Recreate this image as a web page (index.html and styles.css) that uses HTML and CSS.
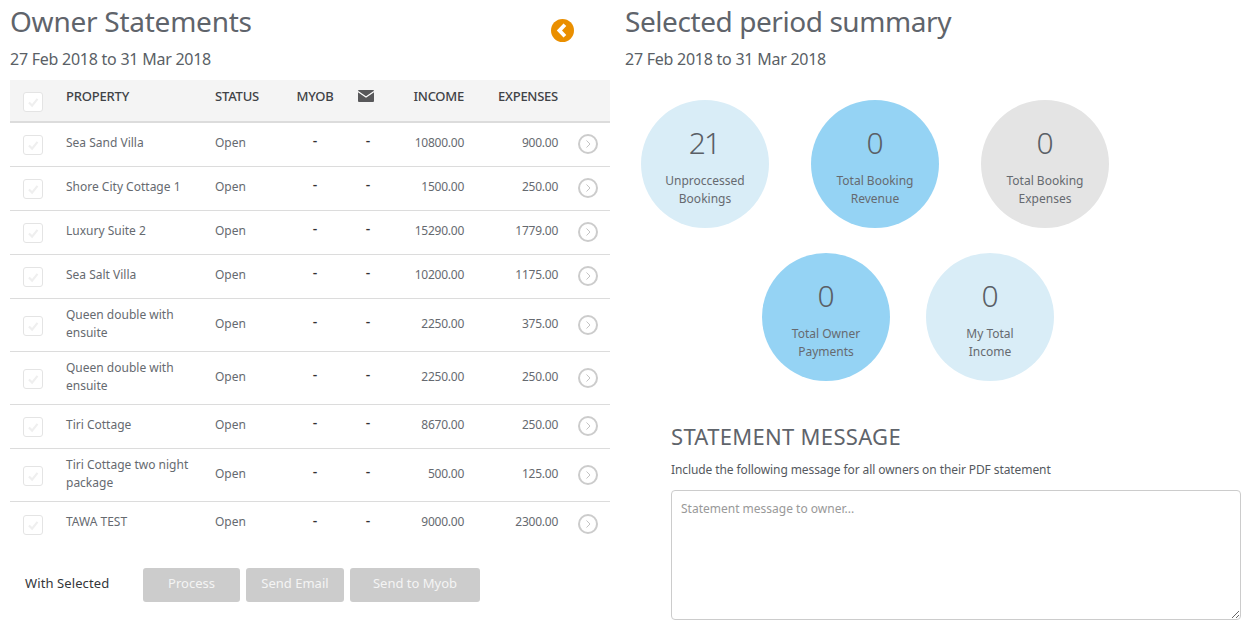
FILE: index.html
```html
<!DOCTYPE html>
<html lang="en">
<head>
<meta charset="utf-8">
<title>Owner Statements</title>
<link rel="stylesheet" href="styles.css">
</head>
<body>
<div class="page">
  <section class="left">
    <div class="title-row">
      <div>
        <h1>Owner Statements</h1>
        <p class="dates">27 Feb 2018 to 31 Mar 2018</p>
      </div>
      <span class="back"><svg viewBox="0 0 24 24" width="23" height="23"><circle cx="12" cy="12" r="12" fill="#ea8f00"/><path d="M14.5 6 8.8 12l5.7 6" fill="none" stroke="#fff" stroke-width="4"/></svg></span>
    </div>
    <table class="grid">
      <colgroup><col class="c1"><col class="c2"><col class="c3"><col class="c4"><col class="c5"><col class="c6"><col class="c7"><col class="c8"></colgroup>
      <thead>
        <tr>
          <th class="chk"><span class="box"><svg viewBox="0 0 20 20"><path d="M5.5 10.5 9 14 15 6.5" fill="none" stroke="#efefef" stroke-width="2.4"/></svg></span></th>
          <th>PROPERTY</th><th>STATUS</th><th class="mid">MYOB</th>
          <th class="mid"><svg class="mail" viewBox="0 0 16 12" width="16" height="12"><rect width="16" height="12" rx="1" fill="#58585a"/><path d="M0 1.5 8 7l8-5.5" fill="none" stroke="#fff" stroke-width="1.1"/></svg></th>
          <th class="num">INCOME</th><th class="num">EXPENSES</th><th></th>
        </tr>
      </thead>
      <tbody>
        <tr><td class="chk"><span class="box"><svg viewBox="0 0 20 20"><path d="M5.5 10.5 9 14 15 6.5" fill="none" stroke="#efefef" stroke-width="2.4"/></svg></span></td><td>Sea Sand Villa</td><td>Open</td><td class="mid dash">-</td><td class="mid dash">-</td><td class="num">10800.00</td><td class="num">900.00</td><td class="go"><svg viewBox="0 0 20 20" width="20" height="20"><circle cx="10" cy="10" r="9" fill="none" stroke="#ccc" stroke-width="2"/><path d="M8.5 6.5 12 10l-3.5 3.5" fill="none" stroke="#c4c4c4"/></svg></td></tr>
        <tr><td class="chk"><span class="box"><svg viewBox="0 0 20 20"><path d="M5.5 10.5 9 14 15 6.5" fill="none" stroke="#efefef" stroke-width="2.4"/></svg></span></td><td>Shore City Cottage 1</td><td>Open</td><td class="mid dash">-</td><td class="mid dash">-</td><td class="num">1500.00</td><td class="num">250.00</td><td class="go"><svg viewBox="0 0 20 20" width="20" height="20"><circle cx="10" cy="10" r="9" fill="none" stroke="#ccc" stroke-width="2"/><path d="M8.5 6.5 12 10l-3.5 3.5" fill="none" stroke="#c4c4c4"/></svg></td></tr>
        <tr><td class="chk"><span class="box"><svg viewBox="0 0 20 20"><path d="M5.5 10.5 9 14 15 6.5" fill="none" stroke="#efefef" stroke-width="2.4"/></svg></span></td><td>Luxury Suite 2</td><td>Open</td><td class="mid dash">-</td><td class="mid dash">-</td><td class="num">15290.00</td><td class="num">1779.00</td><td class="go"><svg viewBox="0 0 20 20" width="20" height="20"><circle cx="10" cy="10" r="9" fill="none" stroke="#ccc" stroke-width="2"/><path d="M8.5 6.5 12 10l-3.5 3.5" fill="none" stroke="#c4c4c4"/></svg></td></tr>
        <tr><td class="chk"><span class="box"><svg viewBox="0 0 20 20"><path d="M5.5 10.5 9 14 15 6.5" fill="none" stroke="#efefef" stroke-width="2.4"/></svg></span></td><td>Sea Salt Villa</td><td>Open</td><td class="mid dash">-</td><td class="mid dash">-</td><td class="num">10200.00</td><td class="num">1175.00</td><td class="go"><svg viewBox="0 0 20 20" width="20" height="20"><circle cx="10" cy="10" r="9" fill="none" stroke="#ccc" stroke-width="2"/><path d="M8.5 6.5 12 10l-3.5 3.5" fill="none" stroke="#c4c4c4"/></svg></td></tr>
        <tr class="tall"><td class="chk"><span class="box"><svg viewBox="0 0 20 20"><path d="M5.5 10.5 9 14 15 6.5" fill="none" stroke="#efefef" stroke-width="2.4"/></svg></span></td><td>Queen double with ensuite</td><td>Open</td><td class="mid dash">-</td><td class="mid dash">-</td><td class="num">2250.00</td><td class="num">375.00</td><td class="go"><svg viewBox="0 0 20 20" width="20" height="20"><circle cx="10" cy="10" r="9" fill="none" stroke="#ccc" stroke-width="2"/><path d="M8.5 6.5 12 10l-3.5 3.5" fill="none" stroke="#c4c4c4"/></svg></td></tr>
        <tr class="tall"><td class="chk"><span class="box"><svg viewBox="0 0 20 20"><path d="M5.5 10.5 9 14 15 6.5" fill="none" stroke="#efefef" stroke-width="2.4"/></svg></span></td><td>Queen double with ensuite</td><td>Open</td><td class="mid dash">-</td><td class="mid dash">-</td><td class="num">2250.00</td><td class="num">250.00</td><td class="go"><svg viewBox="0 0 20 20" width="20" height="20"><circle cx="10" cy="10" r="9" fill="none" stroke="#ccc" stroke-width="2"/><path d="M8.5 6.5 12 10l-3.5 3.5" fill="none" stroke="#c4c4c4"/></svg></td></tr>
        <tr><td class="chk"><span class="box"><svg viewBox="0 0 20 20"><path d="M5.5 10.5 9 14 15 6.5" fill="none" stroke="#efefef" stroke-width="2.4"/></svg></span></td><td>Tiri Cottage</td><td>Open</td><td class="mid dash">-</td><td class="mid dash">-</td><td class="num">8670.00</td><td class="num">250.00</td><td class="go"><svg viewBox="0 0 20 20" width="20" height="20"><circle cx="10" cy="10" r="9" fill="none" stroke="#ccc" stroke-width="2"/><path d="M8.5 6.5 12 10l-3.5 3.5" fill="none" stroke="#c4c4c4"/></svg></td></tr>
        <tr class="tall"><td class="chk"><span class="box"><svg viewBox="0 0 20 20"><path d="M5.5 10.5 9 14 15 6.5" fill="none" stroke="#efefef" stroke-width="2.4"/></svg></span></td><td>Tiri Cottage two night package</td><td>Open</td><td class="mid dash">-</td><td class="mid dash">-</td><td class="num">500.00</td><td class="num">125.00</td><td class="go"><svg viewBox="0 0 20 20" width="20" height="20"><circle cx="10" cy="10" r="9" fill="none" stroke="#ccc" stroke-width="2"/><path d="M8.5 6.5 12 10l-3.5 3.5" fill="none" stroke="#c4c4c4"/></svg></td></tr>
        <tr class="last"><td class="chk"><span class="box"><svg viewBox="0 0 20 20"><path d="M5.5 10.5 9 14 15 6.5" fill="none" stroke="#efefef" stroke-width="2.4"/></svg></span></td><td>TAWA TEST</td><td>Open</td><td class="mid dash">-</td><td class="mid dash">-</td><td class="num">9000.00</td><td class="num">2300.00</td><td class="go"><svg viewBox="0 0 20 20" width="20" height="20"><circle cx="10" cy="10" r="9" fill="none" stroke="#ccc" stroke-width="2"/><path d="M8.5 6.5 12 10l-3.5 3.5" fill="none" stroke="#c4c4c4"/></svg></td></tr>
      </tbody>
    </table>
    <div class="actions">
      <span class="with">With Selected</span>
      <button class="btn b1" type="button">Process</button>
      <button class="btn b2" type="button">Send Email</button>
      <button class="btn b3" type="button">Send to Myob</button>
    </div>
  </section>
  <section class="right">
    <h1>Selected period summary</h1>
    <p class="dates">27 Feb 2018 to 31 Mar 2018</p>
    <div class="circles first">
      <div class="circle pale"><strong>21</strong><span>Unproccessed Bookings</span></div>
      <div class="circle blue"><strong>0</strong><span>Total Booking Revenue</span></div>
      <div class="circle grey"><strong>0</strong><span>Total Booking Expenses</span></div>
    </div>
    <div class="circles second">
      <div class="circle blue"><strong>0</strong><span>Total Owner Payments</span></div>
      <div class="circle pale"><strong>0</strong><span>My Total Income</span></div>
    </div>
    <div class="message">
      <h2>STATEMENT MESSAGE</h2>
      <p>Include the following message for all owners on their PDF statement</p>
      <textarea placeholder="Statement message to owner..."></textarea>
    </div>
  </section>
</div>
</body>
</html>
```

FILE: styles.css
```css
* { box-sizing: border-box; }
html, body { margin: 0; padding: 0; }
body {
  font-family: "Noto Sans", "Open Sans", sans-serif;
  font-size: 12px;
  line-height: 18px;
  color: #666a70;
  background: #fff;
  overflow: hidden;
}
.page { display: flex; width: 1249px; height: 627px; }
.left { width: 625px; padding-left: 10px; }
.right { flex: 1; }
h1 {
  margin: 0;
  padding-top: 3px;
  font-size: 28px;
  line-height: 36px;
  font-weight: 400;
  letter-spacing: -0.25px;
  color: #5f646b;
}
.right h1 { letter-spacing: -0.43px; }
.dates {
  margin: 9px 0 0;
  font-size: 16px;
  line-height: 22px;
  letter-spacing: -0.25px;
  color: #5a5f66;
}
.title-row { display: flex; justify-content: space-between; width: 564px; height: 80px; }
.back { padding-top: 19px; }
.back svg { display: block; }
.grid { width: 600px; border-collapse: separate; border-spacing: 0; table-layout: fixed; }
.c1 { width: 46px; } .c2 { width: 149px; } .c3 { width: 81px; } .c4 { width: 58px; }
.c5 { width: 46px; } .c6 { width: 84px; } .c7 { width: 94px; } .c8 { width: 42px; }
th, td { padding: 6px 10px 10px; vertical-align: middle; text-align: left; font-weight: 400; }
th {
  height: 43px;
  padding: 3px 10px 13px;
  background: #f4f4f4;
  border-bottom: 2px solid #dcdcdc;
  color: #3f4246;
  font-size: 13px;
  font-weight: 500;
  letter-spacing: -0.2px;
}
td { height: 44px; border-bottom: 1px solid #dcdcdc; }
.tall td { padding-top: 7px; padding-bottom: 9px; }
.last td { border-bottom: 0; }
.mid { text-align: center; }
.num { text-align: right; letter-spacing: -0.25px; }
.dash { color: #333; font-size: 14px; font-weight: 500; padding-bottom: 13px; }
td.dash:nth-child(5) { padding-left: 12px; }
.tall .dash { padding-bottom: 13px; padding-top: 6px; }
.chk, .tall .chk { padding: 0 0 0 13px; }
th.chk { padding-top: 2px; }
.box {
  display: block;
  width: 20px;
  height: 20px;
  margin-top: 1px;
  border: 1px solid #e4e4e4;
  border-radius: 3px;
  background: #fff;
}
.box svg { display: block; width: 18px; height: 18px; }
.go, .tall .go { padding: 0 0 1px 10px; }
.go svg { display: block; }
.mail { display: block; margin: 0 auto; transform: translateX(-1px); }
.actions { display: flex; align-items: center; margin: 22px 0 0; padding-left: 15px; }
.with { width: 118px; padding-bottom: 4px; font-size: 13px; letter-spacing: 0.1px; color: #33363a; }
.btn {
  height: 34px;
  margin-right: 6px;
  padding: 0 0 5px;
  border: 0;
  border-radius: 3px;
  background: #ccc;
  color: #f4f4f4;
  font: 13px/18px "Noto Sans", "Open Sans", sans-serif;
}
.b1 { width: 97px; } .b2 { width: 98px; } .b3 { width: 130px; }
.circles { display: flex; }
.first { gap: 42px; padding: 30px 0 0 16px; }
.second { gap: 36px; padding: 25px 0 0 137px; }
.circle {
  display: flex;
  flex-direction: column;
  align-items: center;
  width: 128px;
  height: 128px;
  padding: 25px 20px 0;
  border-radius: 50%;
  text-align: center;
}
.circle strong { margin-right: 2px; font-size: 30px; line-height: 36px; font-weight: 300; letter-spacing: -2px; color: #5a5f66; }
.circle span { margin-top: 11px; }
.pale { background: #d9edf7; }
.blue { background: #95d3f4; }
.grey { background: #e4e4e4; }
.message { padding: 39px 8px 0 46px; }
h2 {
  margin: 0;
  font-size: 22px;
  line-height: 32px;
  font-weight: 400;
  letter-spacing: 0.3px;
  color: #5f646b;
}
.message p { margin: 9px 0 0; letter-spacing: -0.09px; color: #55595e; }
textarea {
  display: block;
  width: 570px;
  height: 130px;
  margin-top: 11px;
  padding: 9px 9px;
  border: 1px solid #ccc;
  border-radius: 4px;
  font: 12px/18px "Noto Sans", "Open Sans", sans-serif;
  color: #555;
}
textarea::placeholder { color: #999; opacity: 1; }
```
